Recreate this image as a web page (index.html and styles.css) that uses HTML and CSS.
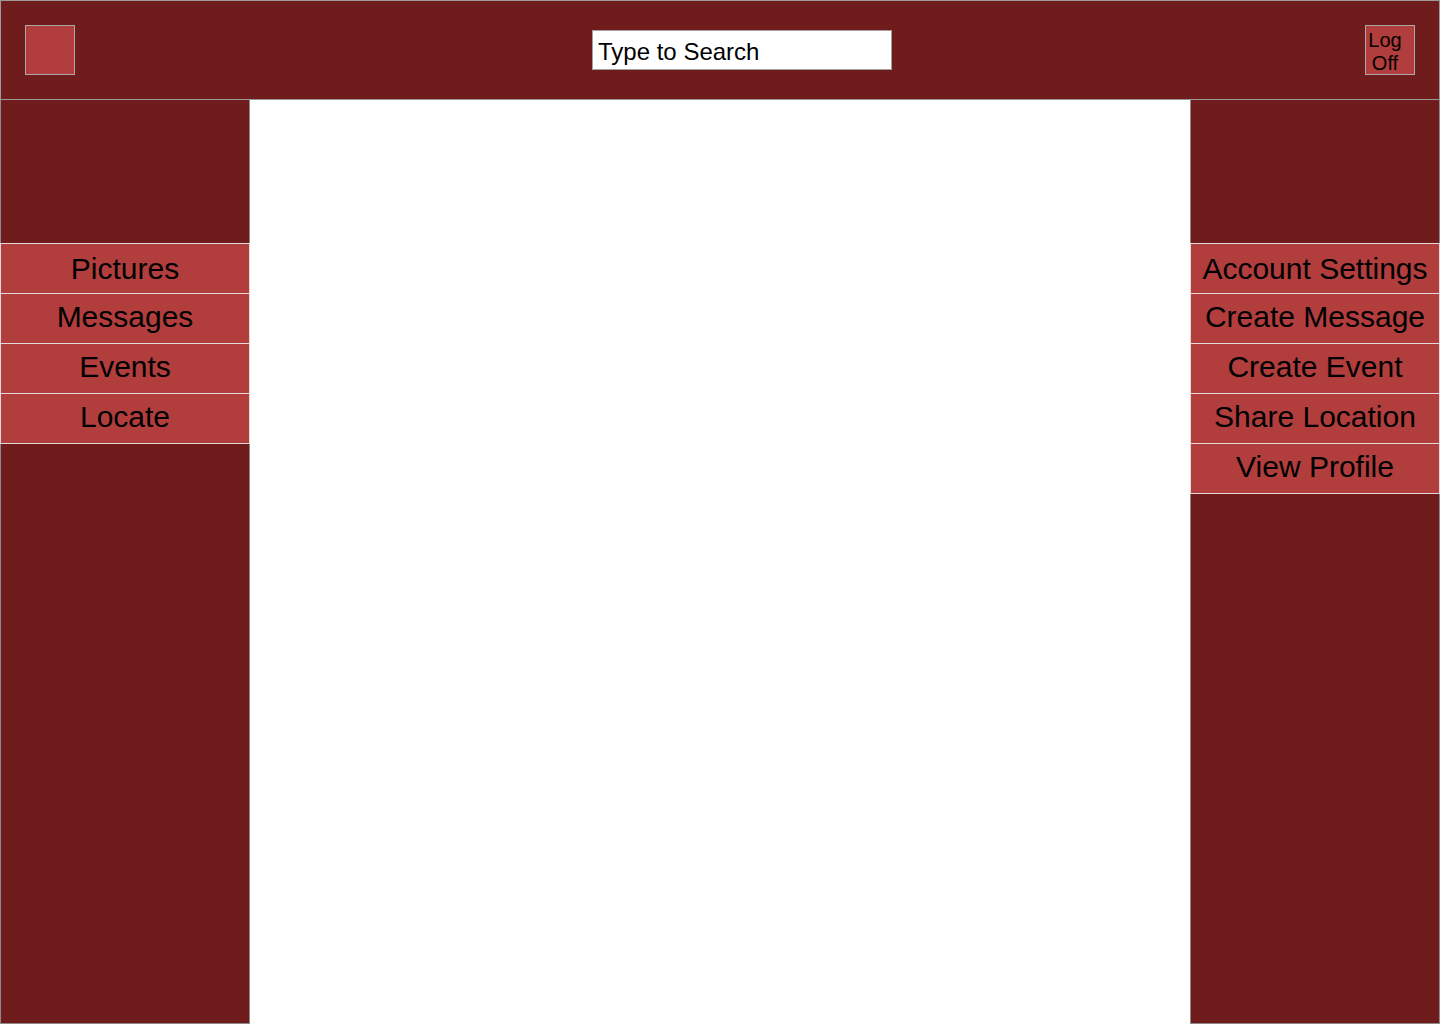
FILE: index.html
```html
<!DOCTYPE html>
<html>
<head>
<meta charset="utf-8">
<title>Dashboard</title>
<link rel="stylesheet" href="styles.css">
</head>
<body>
<header class="topbar">
  <div class="logo"></div>
  <div class="search">Type to Search</div>
  <div class="logoff">Log Off</div>
</header>
<div class="layout">
  <nav class="sidebar">
    <div class="spacer"></div>
    <ul class="menu">
      <li>Pictures</li>
      <li>Messages</li>
      <li>Events</li>
      <li>Locate</li>
    </ul>
  </nav>
  <main class="content"></main>
  <nav class="sidebar">
    <div class="spacer"></div>
    <ul class="menu">
      <li>Account Settings</li>
      <li>Create Message</li>
      <li>Create Event</li>
      <li>Share Location</li>
      <li>View Profile</li>
    </ul>
  </nav>
</div>
</body>
</html>
```
FILE: styles.css
```css
* { box-sizing: border-box; }
html, body {
  margin: 0;
  padding: 0;
  background: #ffffff;
  font-family: "Liberation Sans", Arial, sans-serif;
  color: #000;
}
.topbar {
  height: 100px;
  background: #701c1c;
  border: 1px solid #9a9a9a;
  padding: 24px;
  display: flex;
  align-items: flex-start;
}
.logo {
  width: 50px;
  height: 50px;
  background: #b23d3d;
  border: 1px solid #a8a8a8;
}
.search {
  width: 300px;
  height: 40px;
  margin-top: 5px;
  margin-left: 517px;
  background: #fff;
  border: 1px solid #a0a0a0;
  font-size: 24px;
  line-height: 38px;
  padding: 2px 0 0 5px;
}
.logoff {
  margin-left: auto;
  width: 50px;
  height: 50px;
  background: #b23d3d;
  border: 1px solid #a8a8a8;
  font-size: 20px;
  line-height: 23px;
  text-align: center;
  padding: 3px 10px 0 0;
  overflow: hidden;
}
.layout {
  display: flex;
  height: 924px;
}
.sidebar {
  width: 250px;
  flex: none;
  background: #701c1c;
  border: 1px solid #8c8c8c;
  border-top: none;
  display: flex;
  flex-direction: column;
}
.spacer { height: 143px; }
.menu {
  list-style: none;
  margin: 0 -1px 0 -1px;
  padding: 0;
}
.menu li {
  height: 50px;
  background: #b23d3d;
  border-top: 1px solid #e4d8d8;
  border-left: 1px solid #e4d8d8;
  border-right: 1px solid #e4d8d8;
  font-size: 30px;
  line-height: 45px;
  text-align: center;
  white-space: nowrap;
}
.menu li:first-child { line-height: 49px; }
.menu li:last-child {
  height: 51px;
  border-bottom: 1px solid #e4d8d8;
}
.content {
  flex: 1;
  background: #ffffff;
}
```
